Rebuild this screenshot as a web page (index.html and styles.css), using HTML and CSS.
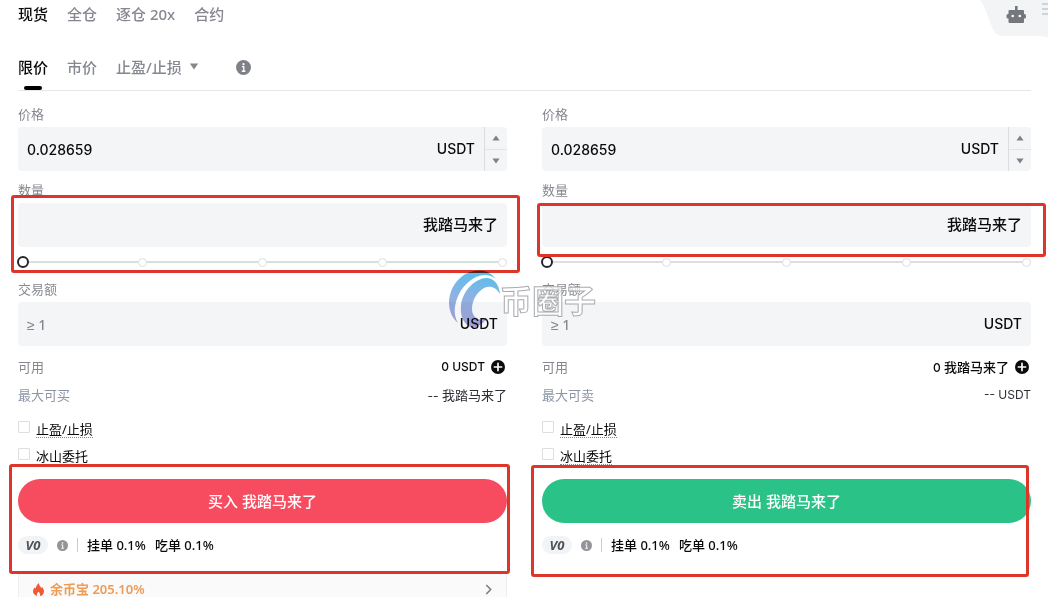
FILE: index.html
```html
<!DOCTYPE html>
<html lang="zh-CN">
<head>
<meta charset="utf-8">
<meta name="viewport" content="width=device-width, initial-scale=1">
<title>现货交易</title>
<link rel="stylesheet" href="styles.css">
</head>
<body>
<svg class="defs" width="0" height="0" aria-hidden="true">
  <symbol id="info" viewBox="0 0 16 16"><circle cx="8" cy="8" r="8" fill="currentColor"/><circle cx="8" cy="4.4" r="1.2" fill="#fff"/><path d="M6.300 7h2v4.600M6.200 12h3.800" fill="none" stroke="#fff" stroke-width="1.400"/></symbol>
  <symbol id="plus" viewBox="0 0 16 16"><circle cx="8" cy="8" r="8" fill="#0b0b0d"/><path d="M8 3.8v8.4M3.8 8h8.4" stroke="#fff" stroke-width="1.9" stroke-linecap="round"/></symbol>
  <symbol id="up" viewBox="0 0 8 6"><path d="M4 .5 7.6 5.5H.4z" fill="currentColor"/></symbol>
  <symbol id="down" viewBox="0 0 8 6"><path d="M4 5.5 7.6.5H.4z" fill="currentColor"/></symbol>
</svg>

<main class="page">
  <nav class="tabs modes">
    <button class="tab active">现货</button>
    <button class="tab">全仓</button>
    <button class="tab">逐仓 20x</button>
    <button class="tab">合约</button>
  </nav>
  <nav class="tabs types">
    <button class="tab active marked">限价</button>
    <button class="tab">市价</button>
    <button class="tab">止盈/止损 <svg class="caret"><use href="#down"/></svg></button>
    <button class="tip" aria-label="说明"><svg><use href="#info"/></svg></button>
  </nav>

  <div class="columns">
    <form class="order buy">
      <label class="label" for="bp">价格</label>
      <div class="field">
        <input id="bp" type="text" value="0.028659"><span class="unit">USDT</span>
        <div class="stepper">
          <button type="button" aria-label="增加"><svg><use href="#up"/></svg></button>
          <button type="button" aria-label="减少"><svg><use href="#down"/></svg></button>
        </div>
      </div>
      <div class="group">
        <label class="label" for="bq">数量</label>
        <div class="field"><input id="bq" type="text"><span class="unit token">我踏马来了</span></div>
        <div class="slider">
          <div class="stops"><i></i><i></i><i></i><i></i><i></i></div>
          <input type="range" min="0" max="100" value="0" aria-label="数量比例">
        </div>
        <span class="frame frame-amount"></span>
      </div>
      <label class="label total" for="bt">交易额</label>
      <div class="field"><input id="bt" type="text" placeholder="≥ 1"><span class="unit">USDT</span></div>
      <div class="row"><span>可用</span><span class="value">0 USDT <button type="button" class="add" aria-label="充值"><svg><use href="#plus"/></svg></button></span></div>
      <div class="row max"><span>最大可买</span><span class="value"><span>-- <b>我踏马来了</b></span></span></div>
      <div class="check"><input type="checkbox" id="b1"><label for="b1">止盈/止损</label></div>
      <div class="check"><input type="checkbox" id="b2"><label for="b2">冰山委托</label></div>
      <div class="group actions">
        <button type="button" class="submit">买入 我踏马来了</button>
        <div class="fees"><span class="level">V0</span><svg class="hint"><use href="#info"/></svg><span class="bar"></span><span>挂单 0.1%</span><span>吃单 0.1%</span></div>
        <span class="frame frame-action"></span>
      </div>
      <a class="promo" href="#">
        <svg class="flame" viewBox="0 0 12 14"><path d="M6.2 0C6.6 2.500 8 3.500 9 5.300L10 4.300C11.200 6 12 7.400 12 9.100 12 12 9.800 14 7.400 14 8.300 12.500 7.700 11 6 9.400 4.300 11 3.800 12.500 4.700 14 2 13.700 0 11.700 0 9 0 7.300.9 6 1.800 4.800L3 6C3.200 3.500 4.600 2 6.200 0z" fill="#ee5a34"/></svg>
        <span>余币宝 205.10%</span>
        <svg class="chevron" viewBox="0 0 8 10"><path d="M2 1l4 4-4 4" fill="none" stroke="#777" stroke-width="1.300"/></svg>
      </a>
    </form>

    <form class="order sell">
      <label class="label" for="sp">价格</label>
      <div class="field">
        <input id="sp" type="text" value="0.028659"><span class="unit">USDT</span>
        <div class="stepper">
          <button type="button" aria-label="增加"><svg><use href="#up"/></svg></button>
          <button type="button" aria-label="减少"><svg><use href="#down"/></svg></button>
        </div>
      </div>
      <div class="group">
        <label class="label" for="sq">数量</label>
        <div class="field"><input id="sq" type="text"><span class="unit token">我踏马来了</span></div>
        <div class="slider">
          <div class="stops"><i></i><i></i><i></i><i></i><i></i></div>
          <input type="range" min="0" max="100" value="0" aria-label="数量比例">
        </div>
        <span class="frame frame-amount"></span>
      </div>
      <label class="label total" for="st">交易额</label>
      <div class="field"><input id="st" type="text" placeholder="≥ 1"><span class="unit">USDT</span></div>
      <div class="row"><span>可用</span><span class="value"><span>0 <b>我踏马来了</b></span> <button type="button" class="add" aria-label="充值"><svg><use href="#plus"/></svg></button></span></div>
      <div class="row max"><span>最大可卖</span><span class="value">-- USDT</span></div>
      <div class="check"><input type="checkbox" id="s1"><label for="s1">止盈/止损</label></div>
      <div class="check"><input type="checkbox" id="s2"><label for="s2">冰山委托</label></div>
      <div class="group actions">
        <button type="button" class="submit">卖出 我踏马来了</button>
        <div class="fees"><span class="level">V0</span><svg class="hint"><use href="#info"/></svg><span class="bar"></span><span>挂单 0.1%</span><span>吃单 0.1%</span></div>
        <span class="frame frame-action"></span>
      </div>
    </form>
  </div>

  <button class="bot" aria-label="交易机器人">
    <svg viewBox="0 0 68 38">
      <path d="M0 0C5 6 8 17 12 27 15 34 18 36 25 36H60Q66 36 68 38V0z" fill="#f3f4f6"/>
      <g fill="#74777d"><rect x="35" y="6" width="2.600" height="5"/><rect x="28.500" y="10" width="15.500" height="13" rx="1"/><rect x="26.500" y="14" width="19.500" height="4.500" rx="1.500"/></g>
      <circle cx="32.700" cy="16" r="1.300" fill="#fff"/><circle cx="39.800" cy="16" r="1.300" fill="#fff"/>
      <path d="M62 4h6M62 9h6M62 14h6" stroke="#c4c6cc" stroke-width="1.500"/>
    </svg>
  </button>

  <div class="watermark">
    <svg viewBox="0 0 52 58">
      <defs><linearGradient id="g" gradientUnits="userSpaceOnUse" x1="30" y1="0" x2="20" y2="58"><stop offset="0" stop-color="#55bfee"/><stop offset=".5" stop-color="#8fb2e2"/><stop offset="1" stop-color="#a9a4da"/></linearGradient></defs>
      <g fill="url(#g)">
        <path d="M48 9C43 2 35-1 26 1 12 4 2 16 1 32 1 41 4 48 10 53 6 46 6 39 8 32 11 21 18 12 28 7 35 4 42 4 48 9z"/>
        <path d="M52 24C51 14 46 8 38 8 26 9 15 21 13 35 12 46 15 54 24 58 29 57 34 54 38 50 29 51 24 46 24 39 24 30 29 22 36 18 42 15 48 17 52 24z"/>
      </g>
    </svg>
    <span>币圈子</span>
  </div>
</main>
</body>
</html>
```
FILE: styles.css
```css
* { box-sizing: border-box; }

body {
  margin: 0;
  background: #fff;
  color: #0b0b0d;
  font: 13px/20px "Noto Sans", "Noto Sans CJK SC", sans-serif;
}

button {
  padding: 0;
  border: 0;
  background: none;
  color: inherit;
  font: inherit;
  cursor: pointer;
}

svg { display: block; }
.defs { position: absolute; }

.page {
  position: relative;
  padding: 3px 17px 0 18px;
  overflow: hidden;
}

.tabs { display: flex; gap: 19px; }

.tab {
  display: flex;
  align-items: center;
  gap: 7px;
  font-size: 15px;
  font-weight: 500;
  line-height: 22px;
  color: #85888e;
}

.tab.active { color: #0b0b0d; }

.types {
  margin-top: 20px;
  height: 46px;
  border-bottom: 1px solid #e6e7ea;
}

.types .tab { padding-bottom: 2px; }
.marked { position: relative; }

.marked::after {
  content: "";
  position: absolute;
  bottom: 0;
  left: 6px;
  width: 18px;
  height: 4px;
  border-radius: 2px;
  background: #000;
}

.caret { width: 10px; height: 7px; }
.tip { margin-left: 18px; color: #7e8187; }
.tip svg { width: 15px; height: 15px; }

.columns {
  display: grid;
  grid-template-columns: 1fr 1fr;
  gap: 35px;
  padding-top: 13px;
}

.label {
  display: block;
  margin-bottom: 3px;
  color: #85888e;
}

.label.total { margin-top: 8px; }

.field {
  display: flex;
  align-items: center;
  height: 44px;
  border-radius: 4px;
  background: #f4f5f7;
}

.field input {
  flex: 1;
  min-width: 0;
  height: 100%;
  padding: 0 9px;
  border: 0;
  outline: 0;
  background: none;
  color: #0b0b0d;
  font: 500 14px Inter, "Noto Sans CJK SC", sans-serif;
}

.field input::placeholder {
  color: #85888e;
  opacity: 1;
  font-family: "Noto Sans", sans-serif;
}

.unit {
  padding-right: 9px;
  font: 500 14px/20px Inter, "Noto Sans CJK SC", sans-serif;
}

.unit.token { font-size: 15px; }

.stepper {
  display: grid;
  grid-template-rows: 1fr 1fr;
  width: 23px;
  height: 100%;
  border-left: 1px solid #dcdde1;
  color: #7e8187;
}

.stepper button { display: grid; place-items: center; }
.stepper button + button { border-top: 1px solid #e3e4e8; }
.stepper svg { width: 8px; height: 6px; }

.group { position: relative; margin-top: 9px; }

.slider {
  display: grid;
  align-items: center;
  height: 18px;
  margin-top: 6px;
}

.slider > * { grid-area: 1 / 1; }

.stops {
  display: flex;
  justify-content: space-between;
  background: linear-gradient(#dddee5, #dddee5) center / 100% 2px no-repeat;
}

.buy .stops { background-image: linear-gradient(#d5e2d7, #d5e2d7); }

.stops i {
  width: 9px;
  height: 9px;
  border: 1px solid #dcdee2;
  border-radius: 50%;
  background: #fff;
}

.slider input {
  appearance: none;
  height: 12px;
  margin: 0 -1px;
  background: none;
}

.slider input::-webkit-slider-thumb {
  appearance: none;
  width: 12px;
  height: 12px;
  border: 2px solid #25262b;
  border-radius: 50%;
  background: #fff;
}

.row {
  display: flex;
  justify-content: space-between;
  height: 20px;
  margin-top: 8px;
  color: #85888e;
}

.field + .row { margin-top: 11px; }
.max { color: #8b95a5; }

.value {
  display: flex;
  align-items: center;
  gap: 6px;
  color: #0b0b0d;
  font-family: Inter, "Noto Sans CJK SC", sans-serif;
  font-size: 12px;
  font-weight: 500;
}

.value b { font-size: 13px; font-weight: inherit; }
.max .value { color: #2d2f36; font-weight: 400; }
.add { margin-right: 2px; }
.add svg { width: 14px; height: 14px; }

.check {
  display: flex;
  gap: 6px;
  margin-top: 8px;
}

.max + .check { margin-top: 14px; }

.check input {
  appearance: none;
  width: 12px;
  height: 12px;
  margin: 2px 0 0;
  border: 1px solid #dcdee2;
  border-radius: 1px;
}

.check label {
  height: 19px;
  border-bottom: 1px dotted #85888e;
}

.group.actions { margin-top: 14px; }

.submit {
  width: 100%;
  height: 44px;
  border-radius: 22px;
  background: #f74b60;
  color: #fff;
  font-size: 15px;
  font-weight: 500;
}

.sell .submit { background: #2bc287; }

.fees {
  display: flex;
  align-items: center;
  gap: 9px;
  margin-top: 12px;
  font-weight: 500;
}

.level {
  width: 30px;
  border-radius: 9px;
  background: #f1f3f5;
  color: #4d5159;
  font-style: italic;
  font-weight: 700;
  line-height: 18px;
  text-align: center;
}

.hint { width: 11px; height: 11px; color: #929499; }
.bar { width: 1px; height: 14px; background: #c9cbcf; }

.promo {
  display: flex;
  align-items: center;
  gap: 6px;
  margin-top: 16px;
  padding: 9px 13px 0 14px;
  border: 1px solid #efefef;
  border-bottom: 0;
  background: #fafafa;
  color: #ee9b55;
  font-weight: 600;
  line-height: 16px;
  text-decoration: none;
}

.flame { width: 11px; height: 13px; }
.chevron { width: 9px; height: 11px; margin-left: auto; }

.frame {
  position: absolute;
  border: 3px solid #db3629;
  border-radius: 3px;
  pointer-events: none;
}

.buy .frame-amount { inset: 15px -13px -2px -7px; }
.sell .frame-amount { inset: 23px -15px 14px -5px; }
.buy .frame-action { inset: -15px -3px -19px -9px; }
.sell .frame-action { inset: -14px 2px -22px -11px; }

.bot {
  position: absolute;
  top: 0;
  right: 0;
}

.bot svg { width: 68px; height: 38px; }

.watermark {
  position: absolute;
  top: 270px;
  left: calc(50% - 76px);
  display: flex;
  align-items: center;
  pointer-events: none;
}

.watermark svg { width: 52px; height: 58px; mix-blend-mode: multiply; }

.watermark span {
  color: rgba(255, 255, 255, 0.7);
  font: 700 32px/44px "Noto Sans CJK SC", sans-serif;
  -webkit-text-stroke: 1px #aaacb0;
}
```
